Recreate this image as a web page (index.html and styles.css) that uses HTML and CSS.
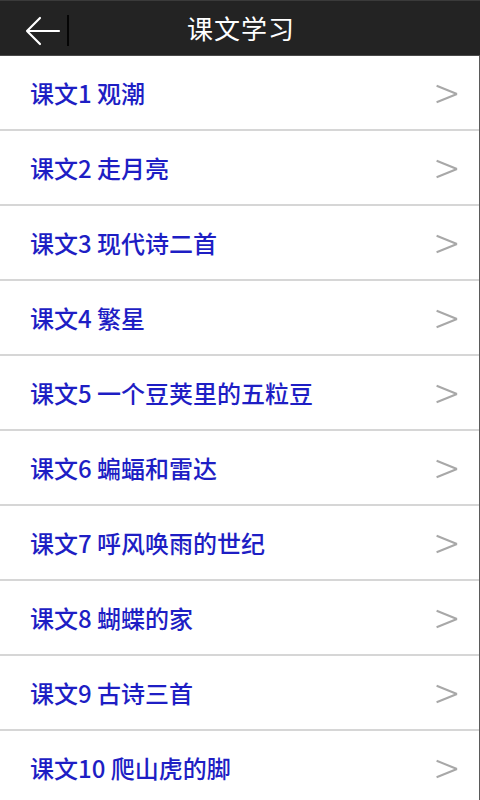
FILE: index.html
```html
<!DOCTYPE html>
<html lang="zh-CN">
<head>
<meta charset="utf-8">
<title>课文学习</title>
<link rel="stylesheet" href="styles.css">
</head>
<body>
<div class="app">
  <header class="topbar">
    <div class="back">
      <svg class="back-icon" width="36" height="30" viewBox="0 0 36 30">
        <path d="M34 15 H2 M15 2 L2 15 L15 28" fill="none" stroke="#fff" stroke-width="2.2" stroke-linecap="round" stroke-linejoin="round"/>
      </svg>
      <span class="back-sep"></span>
    </div>
    <h1 class="title">课文学习</h1>
  </header>
  <ul class="list">
    <li class="row"><span class="label">课文1 观潮</span><span class="chev"></span></li>
    <li class="row"><span class="label">课文2 走月亮</span><span class="chev"></span></li>
    <li class="row"><span class="label">课文3 现代诗二首</span><span class="chev"></span></li>
    <li class="row"><span class="label">课文4 繁星</span><span class="chev"></span></li>
    <li class="row"><span class="label">课文5 一个豆荚里的五粒豆</span><span class="chev"></span></li>
    <li class="row"><span class="label">课文6 蝙蝠和雷达</span><span class="chev"></span></li>
    <li class="row"><span class="label">课文7 呼风唤雨的世纪</span><span class="chev"></span></li>
    <li class="row"><span class="label">课文8 蝴蝶的家</span><span class="chev"></span></li>
    <li class="row"><span class="label">课文9 古诗三首</span><span class="chev"></span></li>
    <li class="row"><span class="label">课文10 爬山虎的脚</span><span class="chev"></span></li>
  </ul>
</div>
</body>
</html>
```
FILE: styles.css
```css
* { box-sizing: border-box; }
html, body { margin: 0; padding: 0; }
body {
  width: 480px;
  height: 800px;
  overflow: hidden;
  background: #fff;
  font-family: "Noto Sans CJK SC", "Noto Sans", sans-serif;
}
.app { width: 480px; height: 800px; display: flex; flex-direction: column; }
.topbar {
  height: 56px;
  flex: none;
  background: #232323;
  border-top: 1px solid #3a3a3a;
  border-bottom: 1px solid #4a4a4a;
  display: flex;
  align-items: center;
  position: relative;
}
.back {
  display: flex;
  align-items: center;
  padding-left: 25px;
  height: 100%;
}
.back-icon { display: block; margin-top: 6px; }
.back-sep {
  width: 2px;
  height: 31px;
  background: #050505;
  margin-left: 6px;
  margin-top: 4px;
}
.title {
  position: absolute;
  left: 0; right: 0; top: 0; bottom: 0;
  margin: 0;
  display: flex;
  align-items: center;
  justify-content: center;
  color: #fff;
  font-weight: normal;
  font-size: 26px;
  letter-spacing: 1px;
  padding-left: 2px;
  padding-bottom: 2px;
  pointer-events: none;
}
.list {
  list-style: none;
  margin: 0;
  padding: 0;
  flex: 1;
  border-right: 1px solid #5a5a5a;
  overflow: hidden;
}
.row {
  height: 75px;
  border-bottom: 2px solid #d6d6d6;
  display: flex;
  align-items: center;
  justify-content: space-between;
  padding: 0 22px 0 30px;
}
.label {
  color: #1e1ec4;
  font-size: 24px;
  font-weight: 500;
  line-height: 1;
  margin-top: 1px;
}
.chev {
  width: 20px;
  height: 18px;
  position: relative;
  margin-top: 2px;
}
.chev::before, .chev::after {
  content: "";
  position: absolute;
  right: 0;
  top: 8px;
  width: 22px;
  height: 2px;
  background: #a8a8a8;
  transform-origin: right center;
}
.chev::before { transform: rotate(22deg); }
.chev::after { transform: rotate(-22deg); }
```
